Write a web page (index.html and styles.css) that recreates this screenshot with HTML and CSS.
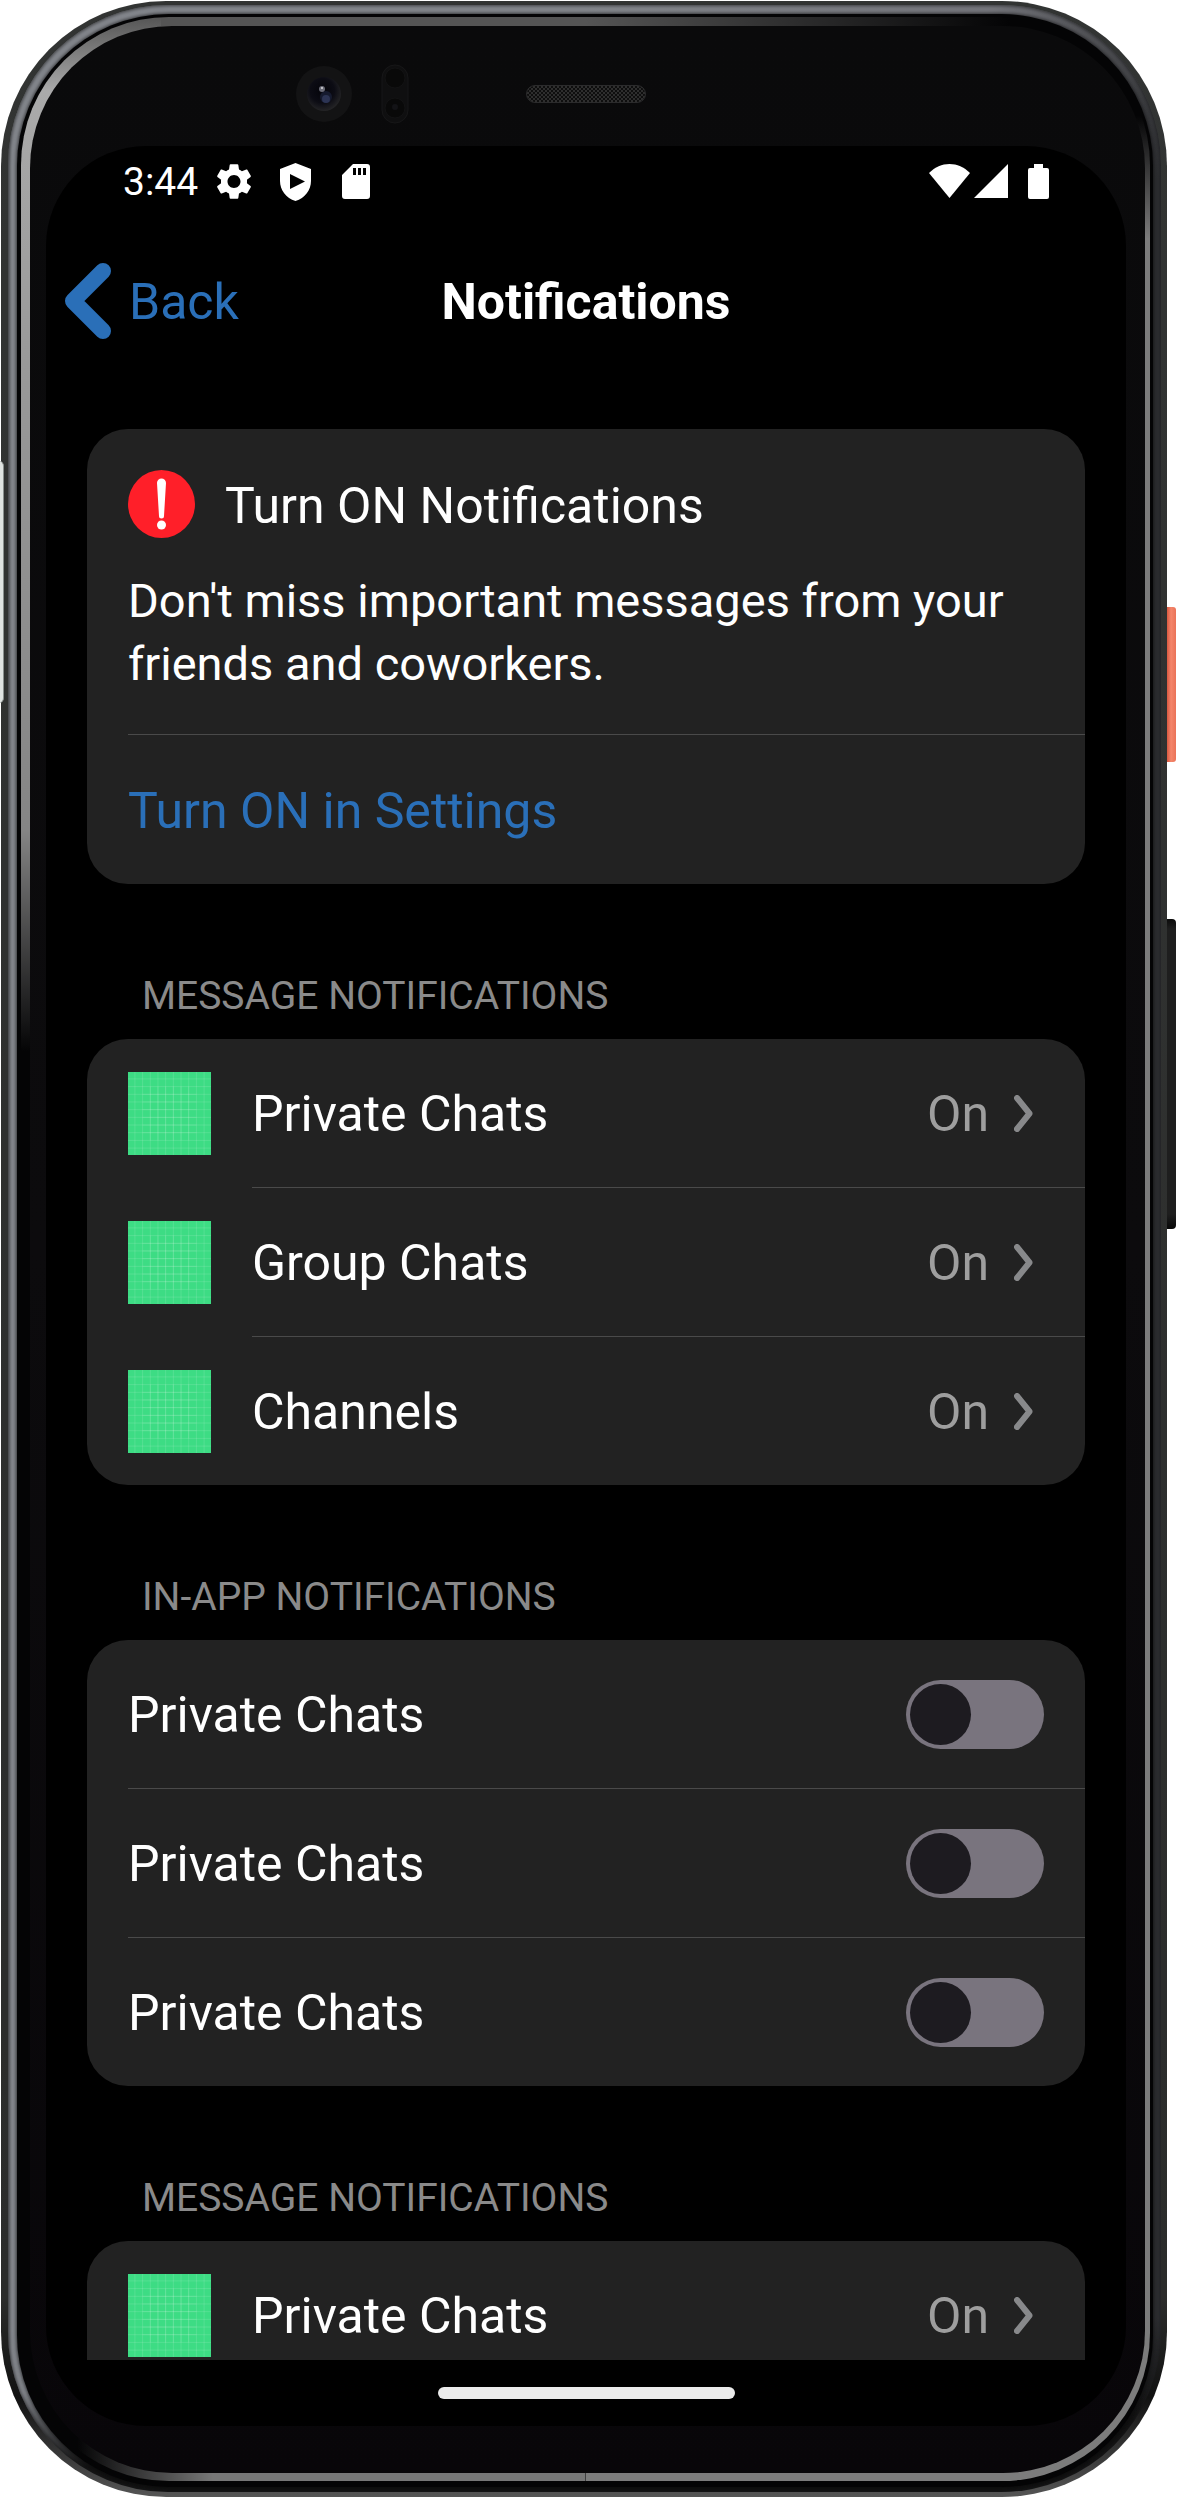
FILE: index.html
```html
<!DOCTYPE html>
<html lang="en">
<head>
<meta charset="utf-8">
<meta name="viewport" content="width=device-width, initial-scale=1">
<title>Notifications</title>
<link rel="stylesheet" href="styles.css">
</head>
<body>
<svg class="symbols" aria-hidden="true">
  <symbol id="chevron" viewBox="0 0 19 37">
    <path d="M3 3 L15.500 18.500 L3 34" fill="none" stroke="currentColor" stroke-width="6" stroke-linecap="round" stroke-linejoin="round"/>
  </symbol>
  <symbol id="tile" viewBox="0 0 108 108">
    <path fill="#3ddc84" d="M0 0h108v108H0z"/>
    <path fill="none" stroke="#fff" stroke-opacity=".2" stroke-width=".8" d="M9 0v108M19 0v108M29 0v108M39 0v108M49 0v108M59 0v108M69 0v108M79 0v108M89 0v108M99 0v108M0 9h108M0 19h108M0 29h108M0 39h108M0 49h108M0 59h108M0 69h108M0 79h108M0 89h108M0 99h108M19 29h70M19 39h70M19 49h70M19 59h70M19 69h70M19 79h70M29 19v70M39 19v70M49 19v70M59 19v70M69 19v70M79 19v70"/>
  </symbol>
</svg>

<div class="phone">
  <span class="side side--tray"></span>
  <span class="side side--power"></span>
  <span class="side side--volume"></span>
  <div class="rim"><div class="groove"><div class="gloss"><div class="bezel">

    <div class="sensors" aria-hidden="true">
      <div class="sensors__left">
        <svg width="58" height="60" viewBox="0 0 58 60">
          <defs><radialGradient id="lens" cx="45%" cy="40%" r="60%"><stop offset="0" stop-color="#04040a"/><stop offset=".6" stop-color="#0c0c14"/><stop offset="1" stop-color="#242426"/></radialGradient></defs>
          <circle cx="29" cy="30" r="28" fill="#131314"/>
          <circle cx="29" cy="30" r="17" fill="url(#lens)"/>
          <circle cx="31" cy="33" r="6" fill="#151a2e"/>
          <circle cx="31" cy="35" r="4" fill="#2c3454"/>
          <circle cx="27" cy="25" r="3" fill="#6b6c78"/>
          <circle cx="27" cy="24" r="1" fill="#d8d8de"/>
        </svg>
        <svg width="28" height="60" viewBox="0 0 28 60">
          <rect x="1" y="1" width="26" height="58" rx="13" fill="#0f0f10" stroke="#171718"/>
          <circle cx="14" cy="14" r="10" fill="#090909" stroke="#131314"/>
          <circle cx="14" cy="44" r="10" fill="#090909" stroke="#131314"/>
          <circle cx="14" cy="43" r="3" fill="#131316"/>
        </svg>
      </div>
      <div class="speaker"></div>
    </div>

    <div class="screen">
      <div class="status">
        <time class="status__time">3:44</time>
        <span class="slot"><svg width="34" height="35" viewBox="2.6 2.4 18.8 19.2"><path fill="#fff" d="M19.14 12.94c.04-.3.06-.61.06-.94 0-.32-.02-.64-.07-.94l2.030-1.580c.18-.14.23-.41.12-.61l-1.920-3.320c-.12-.22-.37-.29-.59-.22l-2.390.96c-.5-.38-1.030-.7-1.620-.94l-.36-2.540c-.04-.24-.24-.41-.48-.41h-3.840c-.24 0-.43.17-.47.41l-.36 2.540c-.59.24-1.130.57-1.620.94l-2.390-.96c-.22-.08-.47 0-.59.22L2.740 8.870c-.12.21-.08.47.12.61l2.030 1.580c-.05.3-.09.63-.09.94s.02.64.07.94l-2.030 1.580c-.18.14-.23.41-.12.61l1.920 3.320c.12.22.37.29.59.22l2.390-.96c.5.38 1.030.7 1.620.94l.36 2.540c.05.24.24.41.48.41h3.840c.24 0 .44-.17.47-.41l.36-2.540c.59-.24 1.130-.56 1.620-.94l2.390.96c.22.08.47 0 .59-.22l1.920-3.320c.12-.22.07-.47-.12-.61l-2.010-1.580zM12 15.600c-1.980 0-3.600-1.620-3.600-3.600s1.620-3.600 3.600-3.600 3.600 1.620 3.600 3.600-1.620 3.600-3.600 3.600z"/></svg></span>
        <span class="slot"><svg width="31" height="38" viewBox="0 0 31 38"><path fill="#fff" fill-rule="evenodd" d="M15.500 0 31 6v12c0 9-6 17-15.500 20C6 35 0 27 0 18V6zM10 11v15l15-7.500z"/></svg></span>
        <span class="slot"><svg width="28" height="35" viewBox="0 0 28 35"><path fill="#fff" fill-rule="evenodd" d="M11 0h14a3 3 0 0 1 3 3v29a3 3 0 0 1-3 3H3a3 3 0 0 1-3-3V11zM11 4v7h3V4zM16 4v7h3V4zM21 4v7h3V4z"/></svg></span>
        <div class="status__right">
          <svg width="41" height="34" viewBox="0 0 41 34"><path fill="#fff" d="M0 9C6 3 13 0 20.500 0S35 3 41 9L20.500 34z"/></svg>
          <svg width="34" height="34" viewBox="0 0 34 34"><path fill="#fff" d="M34 0v34H0z"/></svg>
          <svg class="battery" width="21" height="35" viewBox="0 0 21 35"><path fill="#fff" d="M6 0h9v4h4a2 2 0 0 1 2 2v27a2 2 0 0 1-2 2H2a2 2 0 0 1-2-2V6a2 2 0 0 1 2-2h4z"/></svg>
        </div>
      </div>

      <header class="nav">
        <button class="back" type="button">
          <svg width="47" height="76" viewBox="0 0 47 76"><path d="M39 8 9 38l30 30" fill="none" stroke="currentColor" stroke-width="16" stroke-linecap="round" stroke-linejoin="round"/></svg>
          <span class="back__label">Back</span>
        </button>
        <h1 class="nav__title">Notifications</h1>
      </header>

      <main class="content">
        <section class="card">
          <div class="alert">
            <div class="alert__head">
              <svg width="67" height="68" viewBox="0 0 67 68"><ellipse cx="33.500" cy="34" rx="33.500" ry="34" fill="#ff1f29"/><path fill="#fff" d="M29 13a4.500 4.500 0 0 1 9 0l-2 33a2.500 2.500 0 0 1-5 0z"/><circle cx="33.500" cy="55" r="4.500" fill="#fff"/></svg>
              <h2 class="alert__title">Turn ON Notifications</h2>
            </div>
            <p class="alert__text">Don't miss important messages from your friends and coworkers.</p>
          </div>
          <a class="alert__link" href="#settings">Turn ON in Settings</a>
        </section>

        <h2 class="section-title">MESSAGE NOTIFICATIONS</h2>
        <section class="card">
          <a class="row" href="#private"><svg class="row__icon"><use href="#tile"/></svg><span class="row__body"><span class="row__label">Private Chats</span><span class="row__value">On</span><svg class="row__chevron"><use href="#chevron"/></svg></span></a>
          <a class="row" href="#group"><svg class="row__icon"><use href="#tile"/></svg><span class="row__body"><span class="row__label">Group Chats</span><span class="row__value">On</span><svg class="row__chevron"><use href="#chevron"/></svg></span></a>
          <a class="row" href="#channels"><svg class="row__icon"><use href="#tile"/></svg><span class="row__body"><span class="row__label">Channels</span><span class="row__value">On</span><svg class="row__chevron"><use href="#chevron"/></svg></span></a>
        </section>

        <h2 class="section-title">IN-APP NOTIFICATIONS</h2>
        <section class="card">
          <label class="row"><span class="row__body row__body--switch"><span class="row__label">Private Chats</span><input class="switch" type="checkbox"></span></label>
          <label class="row"><span class="row__body row__body--switch"><span class="row__label">Private Chats</span><input class="switch" type="checkbox"></span></label>
          <label class="row"><span class="row__body row__body--switch"><span class="row__label">Private Chats</span><input class="switch" type="checkbox"></span></label>
        </section>

        <h2 class="section-title">MESSAGE NOTIFICATIONS</h2>
        <section class="card card--continued">
          <a class="row" href="#private-more"><svg class="row__icon"><use href="#tile"/></svg><span class="row__body"><span class="row__label">Private Chats</span><span class="row__value">On</span><svg class="row__chevron"><use href="#chevron"/></svg></span></a>
        </section>
      </main>

      <div class="home"><span class="home__bar"></span></div>
    </div>

  </div></div></div></div>
</div>
</body>
</html>
```
FILE: styles.css
```css
* { box-sizing: border-box; }

body {
  margin: 0;
  background: #fff;
  color: #fff;
  font-family: Roboto, "Noto Sans", sans-serif;
  font-size: 50px;
  line-height: 60px;
}

h1, h2, p { margin: 0; font-size: inherit; font-weight: 400; }
svg { display: block; flex: none; }
a { color: inherit; text-decoration: none; }
.symbols { position: absolute; width: 0; height: 0; }

/* Device frame: nested shells, from the outer edge inwards */
.phone {
  position: relative;
  display: flex;
  height: calc(100vh - 2px);
  margin: 1px 11px 1px 1px;
  padding: 4px 6px 5px 7px;
  border-radius: 165px;
  background: linear-gradient(to bottom, #323433 0, #2b2c2b 92%, #111 96%, #555 100%);
}
.rim, .groove, .gloss, .bezel { display: flex; flex: 1; min-width: 0; min-height: 0; }
.rim {
  padding: 9px 8px 5px 9px;
  border-radius: 160px;
  background:
    linear-gradient(to bottom, transparent 96%, #111 99%),
    linear-gradient(to bottom, transparent 3%, #2d2e31 7%, #2d2e31 93%, #111 97%) right / 50% 100% no-repeat,
    linear-gradient(to right, #6c6f74, #85888e 4px, #85888e 50%, #77787e 85%, #3a3b3e);
  box-shadow: inset 0 0 4px #1a1a1c;
}
.groove {
  padding: 3px 3px 6px 4px;
  border-radius: 152px;
  background: #040405;
  box-shadow: 0 0 4px #0a0a0b;
}
.gloss {
  padding: 9px 5px 8px 9px;
  border-radius: 148px;
  background:
    linear-gradient(to right, #555 50%, #040405) 140px 0 / calc(100% - 280px) 9px no-repeat,
    linear-gradient(to right, transparent 10%, #777 34%) left bottom / 50% 60px no-repeat,
    linear-gradient(to bottom, #040405 4%, #7c7c7c 9%) right / 50% 100% no-repeat,
    linear-gradient(to bottom, #555 0, #aaa 3%, #999 14%, #858585 33%, #040405 42%);
}
.bezel {
  flex-direction: column;
  padding: 0 19px 47px 16px;
  border-radius: 142px;
  background: linear-gradient(to bottom, #0a0a0b, #0c0b0d 50%, #080609);
}

.side { position: absolute; width: 9px; }
.side--tray { top: 460px; left: -2px; width: 5px; height: 242px; border-right: 1px solid #8a908e; border-radius: 0 5px 5px 0; background: #dfe3e1; }
.side--power { top: 606px; right: -9px; height: 155px; border-radius: 0 3px 3px 0; background: linear-gradient(to right, #d9573f, #f4866b 4px, #ea7358); }
.side--volume { top: 918px; right: -9px; height: 310px; border-radius: 0 4px 4px 0; background: linear-gradient(to bottom, #0b0b0b, #1e1e1e 10px, #1e1e1e 295px, #080808); }

.sensors {
  display: grid;
  grid-template-columns: 1fr 120px 1fr;
  column-gap: 117px;
  align-items: center;
  height: 120px;
  padding-top: 16px;
}
.sensors__left { display: flex; justify-content: flex-end; gap: 28px; }
.speaker {
  height: 18px;
  border: 1px solid #2b2b2c;
  border-radius: 9px;
  background: repeating-conic-gradient(#2e2e2e 0 25%, #0e0e0e 0 50%) 0 0 / 4px 4px;
}

/* Screen */
.screen {
  display: flex;
  flex: 1;
  flex-direction: column;
  min-height: 0;
  overflow: hidden;
  border-radius: 100px;
  background: #000;
}
.status { display: flex; flex: none; align-items: center; height: 69px; padding: 2px 77px 0 77px; }
.status__time { margin-right: 15px; font-size: 39px; }
.slot { display: flex; justify-content: center; width: 42px; margin-right: 19px; }
.status__right { display: flex; gap: 4px; margin-left: auto; }
.battery { margin-left: 16px; }

.nav {
  display: grid;
  flex: none;
  grid-template-columns: 1fr auto 1fr;
  align-items: center;
  height: 172px;
  padding: 0 18px;
}
.back {
  display: flex;
  align-items: center;
  justify-self: start;
  gap: 18px;
  padding: 0;
  border: 0;
  background: none;
  color: #2a6fb8;
  font: inherit;
}
.back__label, .nav__title, .alert__title, .row__label, .row__value { padding-top: 2px; }
.nav__title { font-weight: 700; }

.content {
  flex: 1;
  min-height: 0;
  overflow: auto;
  padding: 42px 41px 0;
  scrollbar-width: none;
}

.card { overflow: hidden; border-radius: 41px; background: #222; }
.card--continued { border-radius: 41px 41px 0 0; }
.alert { margin-left: 41px; padding: 41px 41px 39px 0; border-bottom: 1px solid #4a4a4a; }
.alert__head { display: flex; align-items: center; gap: 30px; }
.alert__title { padding-top: 4px; }
.alert__text { margin-top: 31px; font-size: 47px; line-height: 63px; }
.alert__link { display: flex; align-items: center; height: 149px; padding: 3px 41px 0; color: #2a6fb8; }

.section-title {
  padding: 89px 55px 20px;
  color: #8a8a8a;
  font-size: 39px;
  line-height: 46px;
}

.row { display: flex; align-items: center; gap: 41px; padding-left: 41px; }
.row__icon { width: 83px; height: 83px; }
.row__body { display: flex; flex: 1; align-items: center; min-height: 149px; padding-right: 52px; border-bottom: 1px solid #4a4a4a; }
.row__body--switch { padding-right: 41px; }
.row:last-child .row__body { min-height: 148px; border-bottom: 0; }
.row__label { flex: 1; }
.row__value { color: #9e9e9e; }
.row__chevron { width: 19px; height: 37px; margin-left: 25px; color: #88898b; }

.switch {
  appearance: none;
  display: flex;
  width: 138px;
  height: 69px;
  margin: 0;
  padding: 4px;
  border-radius: 35px;
  background: #79747e;
}
.switch::before { content: ""; width: 61px; height: 61px; border-radius: 50%; background: #1d1b20; }
.switch:checked { justify-content: flex-end; }

.home { display: flex; flex: none; align-items: center; justify-content: center; height: 66px; }
.home__bar { width: 297px; height: 12px; border-radius: 6px; background: #ebebeb; }
```
